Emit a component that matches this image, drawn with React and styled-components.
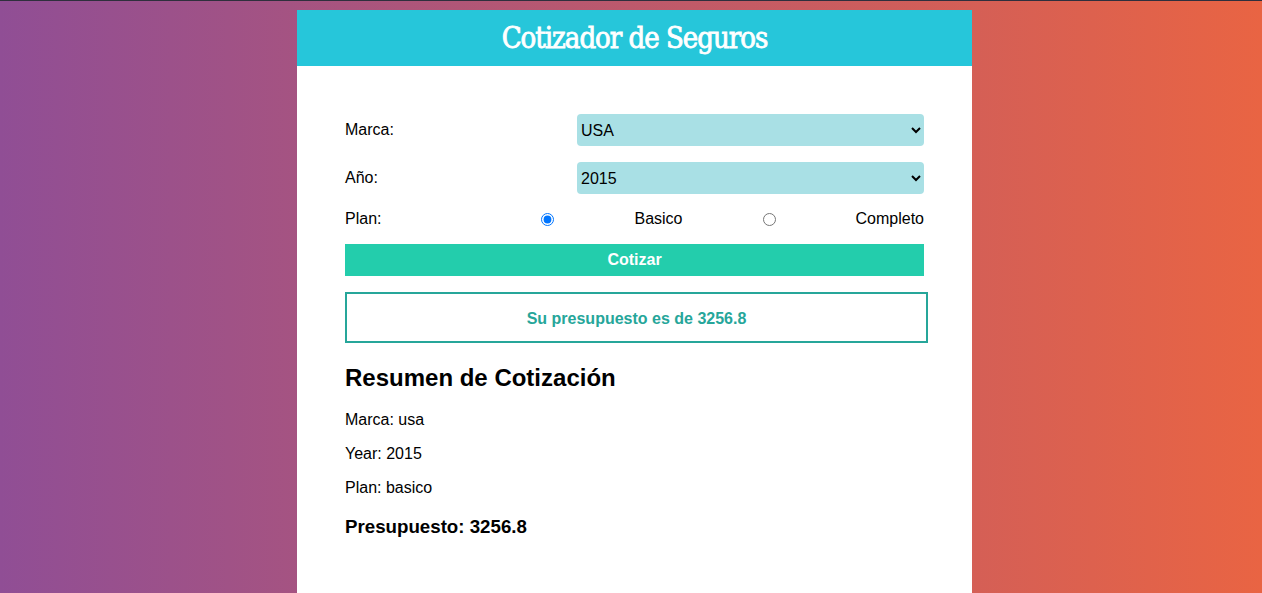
import styled, { createGlobalStyle } from 'styled-components';

const GlobalStyle = createGlobalStyle`
	html, body {
		margin: 0;
		padding: 0;
	}
	body {
		min-height: 100vh;
		background: linear-gradient(to right, #904e95, #e96443);
		border-top: 1px solid #2f2f3d;
		box-sizing: border-box;
		font-family: "Liberation Sans", Arial, sans-serif;
		font-size: 16px;
		color: #000;
	}
`;

const Container = styled.div`
	width: 675px;
	margin: 9px 0 0 calc(50% - 334px);
	background: #fff;
`;

const Header = styled.header`
	background: #26c6da;
	height: 56px;
	display: flex;
	align-items: center;
	justify-content: center;
`;

const Title = styled.h1`
	margin: 0;
	color: #fff;
	font-family: "DejaVu Serif Condensed", "DejaVu Serif", serif;
	font-size: 29px;
	font-weight: normal;
	letter-spacing: -1px;
	-webkit-text-stroke: 0.8px #fff;
`;

const Content = styled.div`
	padding: 48px 48px;
`;

const Form = styled.form`
	display: flex;
	flex-direction: column;
	gap: 16px;
`;

const Field = styled.div`
	display: flex;
	align-items: center;
	gap: ${({ $gap }) => $gap || 0};
`;

const Label = styled.label`
	flex: ${({ $grow }) => ($grow ? '1' : '0 0 232px')};
`;

const Select = styled.select`
	flex: 1;
	height: 32px;
	border: none;
	border-radius: 4px;
	background-color: #a9e0e5;
	font-family: "Liberation Sans", Arial, sans-serif;
	font-size: 16px;
	color: #000;
	padding: 0;
`;

const Radio = styled.input`
	margin: 0;
	width: 13px;
	height: 13px;
`;

const Button = styled.button`
	height: 32px;
	border: none;
	background: #23cdac;
	color: #fff;
	font-family: "Liberation Sans", Arial, sans-serif;
	font-weight: bold;
	font-size: 16px;
	cursor: pointer;
`;

const Result = styled.div`
	margin-top: 16px;
	border: 2px solid #26a69a;
	padding: 15px 0 13px;
	margin-right: -4px;
	text-align: center;
	color: #26a69a;
	font-weight: bold;
	line-height: 19px;
`;

const Summary = styled.div`
	h2 {
		font-size: 24px;
		margin: 21px 0 19px;
	}
	p {
		margin: 16px 0;
	}
	h3 {
		font-size: 18.72px;
		margin: 18.72px 0;
	}
`;

export default function App() {
	return (
		<>
			<GlobalStyle />
			<Container>
				<Header>
					<Title>Cotizador de Seguros</Title>
				</Header>
				<Content>
					<Form onSubmit={(e) => e.preventDefault()}>
						<Field>
							<Label>Marca:</Label>
							<Select defaultValue="usa">
								<option value="">-- Seleccione --</option>
								<option value="americano">Americano</option>
								<option value="europeo">Europeo</option>
								<option value="usa">USA</option>
							</Select>
						</Field>
						<Field>
							<Label>Año:</Label>
							<Select defaultValue="2015">
								{[2021, 2020, 2019, 2018, 2017, 2016, 2015, 2014].map((y) => (
									<option key={y} value={y}>{y}</option>
								))}
							</Select>
						</Field>
						<Field $gap="80px">
							<Label $grow>Plan:</Label>
							<Radio type="radio" name="plan" value="basico" defaultChecked />
							<span>Basico</span>
							<Radio type="radio" name="plan" value="completo" />
							<span>Completo</span>
						</Field>
						<Button type="submit">Cotizar</Button>
					</Form>
					<Result>Su presupuesto es de 3256.8</Result>
					<Summary>
						<h2>Resumen de Cotización</h2>
						<p>Marca: usa</p>
						<p>Year: 2015</p>
						<p>Plan: basico</p>
						<h3>Presupuesto: 3256.8</h3>
					</Summary>
				</Content>
			</Container>
		</>
	);
}
